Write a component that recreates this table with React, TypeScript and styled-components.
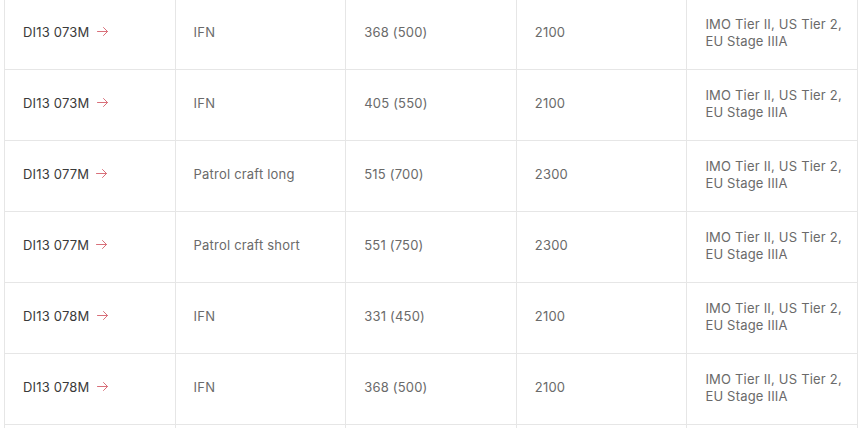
import React from 'react';
import styled, { createGlobalStyle } from 'styled-components';

const GlobalStyle = createGlobalStyle`
  html, body {
    margin: 0;
    padding: 0;
    background: #ffffff;
  }
  body {
    font-family: Inter, "Noto Sans", "Liberation Sans", sans-serif;
  }
`;

const Wrapper = styled.div`
  height: 428px;
  padding: 0 4px;
  overflow: hidden;
`;

const Table = styled.table`
  width: 854px;
  margin-top: -2px;
  border-collapse: collapse;
  table-layout: fixed;
  font-size: 13px;
  line-height: 17px;
`;

const Cell = styled.td<{ $strong?: boolean }>`
  height: 67px;
  padding: 0 10px 3px 18px;
  border: 1px solid #e6e6e6;
  vertical-align: middle;
  letter-spacing: 0.2px;
  color: ${(p) => (p.$strong ? '#3a3a3a' : '#6a6a6a')};
`;

const EngineLink = styled.a`
  display: inline-flex;
  align-items: center;
  gap: 7px;
  color: inherit;
  text-decoration: none;
`;

const Arrow = styled.svg`
  width: 11px;
  height: 9px;
  margin-top: -3px;
`;

interface IEngine {
  model: string;
  application: string;
  power: string;
  rpm: string;
  emission: string;
}

const engines: IEngine[] = [
  { model: 'DI13 073M', application: 'IFN', power: '368 (500)', rpm: '2100', emission: 'IMO Tier II, US Tier 2, EU Stage IIIA' },
  { model: 'DI13 073M', application: 'IFN', power: '405 (550)', rpm: '2100', emission: 'IMO Tier II, US Tier 2, EU Stage IIIA' },
  { model: 'DI13 077M', application: 'Patrol craft long', power: '515 (700)', rpm: '2300', emission: 'IMO Tier II, US Tier 2, EU Stage IIIA' },
  { model: 'DI13 077M', application: 'Patrol craft short', power: '551 (750)', rpm: '2300', emission: 'IMO Tier II, US Tier 2, EU Stage IIIA' },
  { model: 'DI13 078M', application: 'IFN', power: '331 (450)', rpm: '2100', emission: 'IMO Tier II, US Tier 2, EU Stage IIIA' },
  { model: 'DI13 078M', application: 'IFN', power: '368 (500)', rpm: '2100', emission: 'IMO Tier II, US Tier 2, EU Stage IIIA' },
];

const ArrowIcon = () => (
  <Arrow viewBox="0 0 11 9" fill="none" stroke="#d9707a" strokeWidth="1" strokeLinecap="round" strokeLinejoin="round">
    <path d="M0.5 4.5h10M6.5 0.5l4 4-4 4" />
  </Arrow>
);

const App = (): React.ReactElement => (
  <>
    <GlobalStyle />
    <Wrapper>
      <Table>
        <tbody>
          {engines.map((engine, i) => (
            <tr key={i}>
              <Cell $strong>
                <EngineLink href="#">
                  {engine.model}
                  <ArrowIcon />
                </EngineLink>
              </Cell>
              <Cell>{engine.application}</Cell>
              <Cell>{engine.power}</Cell>
              <Cell>{engine.rpm}</Cell>
              <Cell>{engine.emission}</Cell>
            </tr>
          ))}
          <tr>
            <Cell />
            <Cell />
            <Cell />
            <Cell />
            <Cell />
          </tr>
        </tbody>
      </Table>
    </Wrapper>
  </>
);

export default App;
